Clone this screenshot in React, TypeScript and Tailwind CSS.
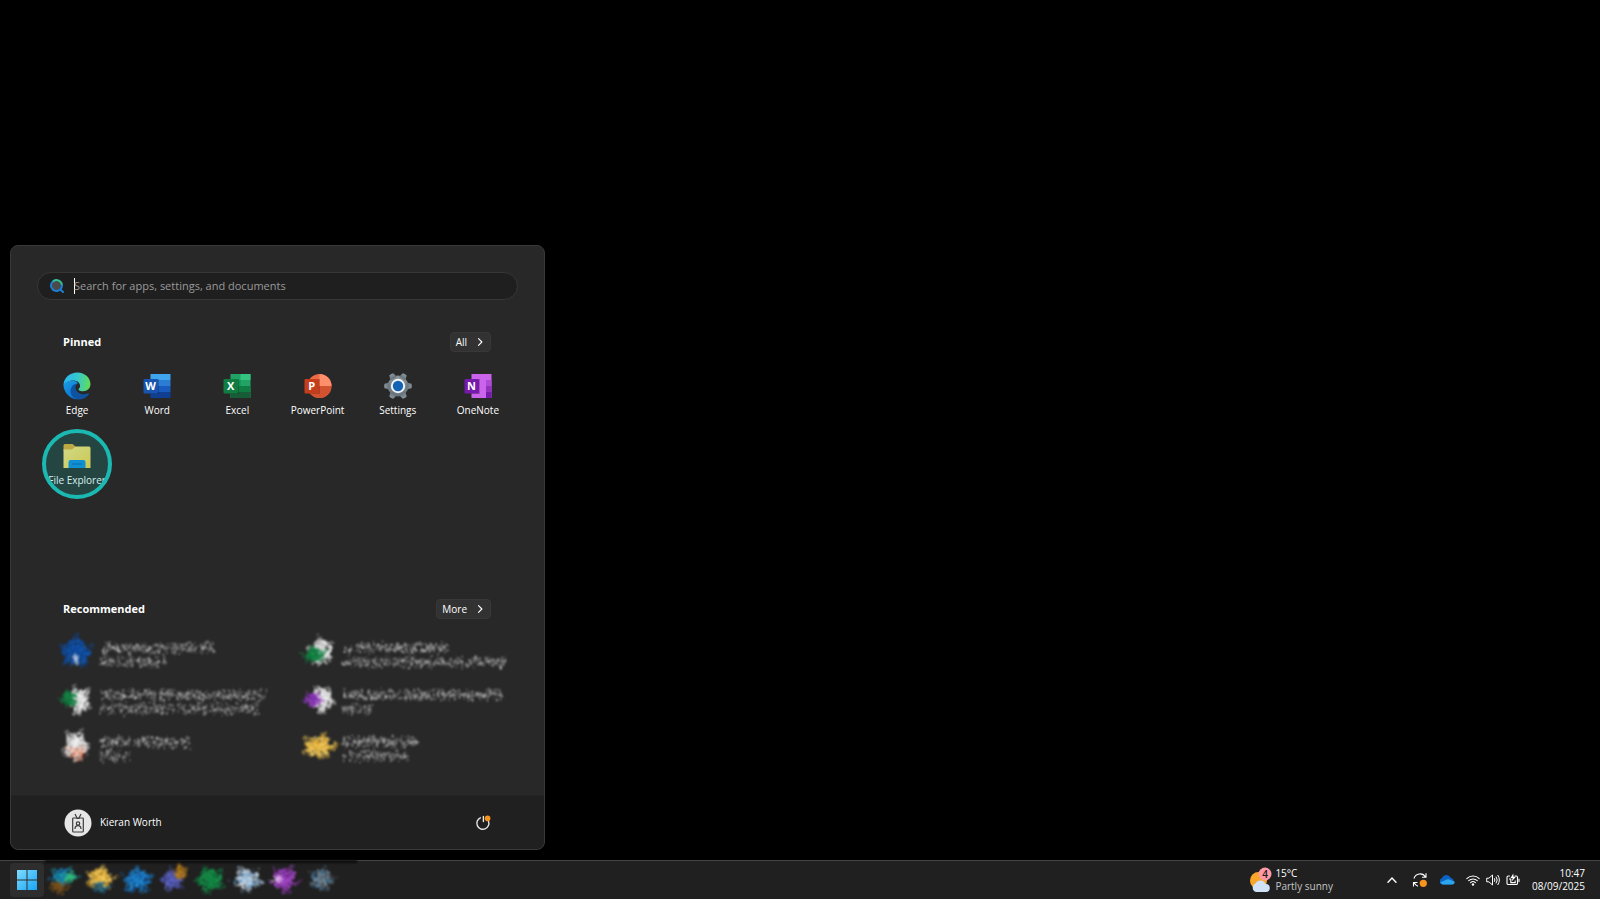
import type { ReactNode } from 'react'

type Blob = { x: number; y: number; rx: number; ry: number; n: number; colors: string[] }

// small seeded generator, so the smudges look the same on every render
function seeded(seed: number) {
  let s = seed * 7919 + 17
  return () => {
    s = (s * 1664525 + 1013904223) % 4294967296
    return s / 4294967296
  }
}

function Smudge({ seed, blobs }: { seed: number; blobs: Blob[] }) {
  const rand = seeded(seed)
  const cells = blobs.flatMap((b) =>
    Array.from({ length: b.n * 2 }, () => {
      const a = rand() * Math.PI * 2
      // most cells sit near the middle, a few fly out along ragged spikes
      const ragged = 0.82 + 0.2 * Math.sin(a * 5 + seed) + 0.12 * Math.sin(a * 11 + seed * 2)
      const r = Math.pow(rand(), 0.75) * ragged
      return {
        x: b.x + Math.cos(a) * r * b.rx,
        y: b.y + Math.sin(a) * r * b.ry,
        o: r > 0.75 ? 0.3 : 0.6,
        c: b.colors[Math.floor(rand() * b.colors.length)],
      }
    }),
  )
  return (
    <svg className="size-8 shrink-0 overflow-visible blur-[0.8px]" viewBox="0 0 32 32" aria-hidden="true">
      {cells.map((p, i) => (
        <rect key={i} x={p.x - 1} y={p.y - 1} width="2.200" height="2.200" fill={p.c} opacity={p.o} />
      ))}
    </svg>
  )
}

function TextSmudge({ seed, widths }: { seed: number; widths: [number, number] }) {
  const rand = seeded(seed)
  const marks = widths.flatMap((w, line) => {
    const list: { x: number; y: number; w: number; h: number; o: number }[] = []
    for (let x = 0; x < w; x += 2) {
      if (rand() < 0.1) continue
      for (let k = 0; k < 5; k++) {
        const y = 10 + line * 14 + (rand() + rand() - 1) * 7
        list.push({ x: x + rand() * 3, y, w: 1 + rand(), h: 1 + rand() * 2, o: (line ? 0.14 : 0.2) + rand() * 0.4 })
      }
    }
    return list
  })
  return (
    <svg className="h-8 w-[176px] shrink-0 overflow-visible blur-[0.9px]" viewBox="0 0 176 32" aria-hidden="true">
      {marks.map((m, i) => (
        <rect key={i} x={m.x} y={m.y} width={m.w} height={m.h} fill="#e8e8e8" opacity={m.o} />
      ))}
    </svg>
  )
}

function EdgeIcon() {
  return (
    <svg viewBox="0 0 256 256" className="size-7" aria-hidden="true">
      <defs>
        <linearGradient id="edgeTop" x1="0" y1="0.4" x2="1" y2="0.5">
          <stop offset="0" stopColor="#2bb5f0" />
          <stop offset="0.5" stopColor="#35c8cf" />
          <stop offset="1" stopColor="#62dd55" />
        </linearGradient>
        <linearGradient id="edgeLeft" x1="0" y1="0" x2="0.6" y2="1">
          <stop offset="0" stopColor="#1b9de2" />
          <stop offset="1" stopColor="#0870d0" />
        </linearGradient>
      </defs>
      <path fill="url(#edgeTop)" d="M5 126C2 50 68 5 130 5c74 0 121 53 121 105 0 39-29 66-68 66-34 0-41-10-41-16 0-8 14-13 14-34 0-29-28-49-60-49-46 0-82 24-91 49z" />
      <path fill="url(#edgeLeft)" d="M5 124C6 182 60 250 130 250c22 0 47-6 61-14-72 8-110-45-92-94 7-24 25-34 37-38-8-16-30-28-56-27C40 79 8 98 5 124z" />
      <path fill="#0f52a0" d="M111 242C60 220 62 160 82 132c12-17 30-26 50-24-14 8-18 24-17 36 4 40 40 63 83 59 14-1 26-6 34-9 5-1 8 4 5 9-22 34-70 59-126 39z" />
    </svg>
  )
}

type OfficeProps = { letter: string; tile: string; children: ReactNode }

function OfficeIcon({ letter, tile, children }: OfficeProps) {
  return (
    <svg viewBox="0 0 28 28" className="size-7" aria-hidden="true">
      {children}
      <rect x="7" y="7" width="9" height="15" fill="#000" opacity="0.2" />
      <rect x="0.5" y="7" width="14.5" height="14.5" rx="1" fill={tile} />
      <text x="7.6" y="18.4" textAnchor="middle" fontSize="11" fontWeight="700" fill="#fff" fontFamily="Open Sans, sans-serif">
        {letter}
      </text>
    </svg>
  )
}

function WordIcon() {
  return (
    <OfficeIcon letter="W" tile="#1853ae">
      <rect x="7.5" y="2" width="20" height="6" fill="#41a5ee" />
      <rect x="7.5" y="8" width="20" height="6" fill="#2b7cd3" />
      <rect x="7.5" y="14" width="20" height="6" fill="#185abd" />
      <rect x="7.5" y="20" width="20" height="6" fill="#103f91" />
    </OfficeIcon>
  )
}

function ExcelIcon() {
  return (
    <OfficeIcon letter="X" tile="#107c41">
      <rect x="7.5" y="2" width="20" height="24" fill="#21a366" />
      <rect x="17.5" y="2" width="10" height="6" fill="#33c481" />
      <rect x="7.5" y="14" width="20" height="6" fill="#107c41" />
      <rect x="7.5" y="8" width="10" height="6" fill="#159052" />
      <rect x="7.5" y="20" width="20" height="6" fill="#185c37" />
    </OfficeIcon>
  )
}

function PowerPointIcon() {
  return (
    <OfficeIcon letter="P" tile="#c43e1c">
      <circle cx="15.5" cy="14" r="12" fill="#ed6c47" />
      <path d="M15.5 2a12 12 0 0 1 12 12h-12z" fill="#ff8f6b" />
      <path d="M3.5 14h24a12 12 0 0 1-24 0z" fill="#d35230" />
    </OfficeIcon>
  )
}

function OneNoteIcon() {
  return (
    <OfficeIcon letter="N" tile="#7719aa">
      <rect x="7.5" y="2" width="20" height="24" fill="#ca64ea" />
      <rect x="22" y="8" width="5.5" height="6" fill="#ae4bd5" />
      <rect x="22" y="14" width="5.5" height="6" fill="#9332bf" />
      <rect x="22" y="20" width="5.5" height="6" fill="#7719aa" />
    </OfficeIcon>
  )
}

function SettingsIcon() {
  return (
    <svg viewBox="0 0 28 28" className="size-7" aria-hidden="true">
      <defs>
        <linearGradient id="gear" x1="0" y1="0" x2="0" y2="1">
          <stop offset="0" stopColor="#8a959c" />
          <stop offset="1" stopColor="#66727a" />
        </linearGradient>
      </defs>
      <g fill="url(#gear)">
        <circle cx="14" cy="14" r="10.4" />
        {[30, 90, 150, 210, 270, 330].map((deg) => (
          <path key={deg} d="M10.400 5.500 11.700.6q2.300-.8 4.600 0l1.300 4.900z" transform={`rotate(${deg} 14 14)`} />
        ))}
      </g>
      <circle cx="14" cy="14" r="7.200" fill="#f0f2f4" />
      <circle cx="14" cy="14" r="5.200" fill="#1462b4" />
    </svg>
  )
}

function FolderIcon() {
  return (
    <svg viewBox="0 0 28 28" className="size-7" aria-hidden="true">
      <defs>
        <linearGradient id="folder" x1="0" y1="0" x2="1" y2="1">
          <stop offset="0" stopColor="#ffe27a" />
          <stop offset="1" stopColor="#f8cc3e" />
        </linearGradient>
      </defs>
      <path d="M0.500 3.500q0-1.500 1.500-1.500h7.500l3 2.500v4h-12z" fill="#e5a52a" />
      <path d="M0.500 7.500h8.500l3.500-3H26q1.500 0 1.500 1.500v20h-27z" fill="url(#folder)" />
      <path d="M5.500 26v-6q0-2 2-2h13q2 0 2 2v6z" fill="#0c86dc" />
      <path d="M9.500 22h9" stroke="#075aa8" strokeWidth="1.200" strokeLinecap="round" />
    </svg>
  )
}

function SearchIcon() {
  return (
    <svg viewBox="0 0 14 14" className="size-[14px] shrink-0" fill="none" aria-hidden="true">
      <circle cx="6.500" cy="6.500" r="5" fill="#4a4a4a" />
      <path d="M6.500 1a5.500 5.500 0 1 0 3.900 9.400" stroke="#1b7fd6" strokeWidth="1.900" />
      <path d="M3 2.400A5.500 5.500 0 0 1 12 6.500" stroke="#34bf8f" strokeWidth="1.900" />
      <path d="M12 6.500a5.500 5.500 0 0 1-1.600 3.900L13 13" stroke="#1b7fd6" strokeWidth="2" strokeLinecap="round" />
    </svg>
  )
}

function Chevron({ className }: { className?: string }) {
  return (
    <svg viewBox="0 0 8 8" className={className} fill="none" stroke="currentColor" strokeWidth="0.900" aria-hidden="true">
      <path d="M2.800 1.300 5.500 4 2.800 6.700" strokeLinecap="round" strokeLinejoin="round" />
    </svg>
  )
}

const pinned = [
  { name: 'Edge', icon: <EdgeIcon /> },
  { name: 'Word', icon: <WordIcon /> },
  { name: 'Excel', icon: <ExcelIcon /> },
  { name: 'PowerPoint', icon: <PowerPointIcon /> },
  { name: 'Settings', icon: <SettingsIcon /> },
  { name: 'OneNote', icon: <OneNoteIcon /> },
  { name: 'File Explorer', icon: <FolderIcon />, highlighted: true },
]

const whites = ['#ffffff', '#e2e2e2', '#bdbdbd', '#f4f4f4']
const greens = ['#107c41', '#1d9a50', '#0d6d38']
const purples = ['#8a35b8', '#a44fd0', '#7a2aa8']
const golds = ['#e8b43a', '#f5cf5c', '#d39a25', '#f7d878']

const recommended: { blobs: Blob[]; widths: [number, number] }[] = [
  {
    blobs: [
      { x: 15, y: 15, rx: 18, ry: 17, n: 260, colors: ['#0f4fa8', '#1560bd', '#123f85', '#0d4796'] },
      { x: 15, y: 22, rx: 4, ry: 7, n: 12, colors: ['#c9d6ea', '#8ea9d2'] },
    ],
    widths: [114, 68],
  },
  {
    blobs: [
      { x: 18, y: 14, rx: 14, ry: 16, n: 150, colors: whites },
      { x: 11, y: 18, rx: 14, ry: 9, n: 90, colors: greens },
    ],
    widths: [106, 164],
  },
  {
    blobs: [
      { x: 18, y: 16, rx: 13, ry: 16, n: 160, colors: whites },
      { x: 8, y: 15, rx: 10, ry: 10, n: 70, colors: greens },
    ],
    widths: [166, 158],
  },
  {
    blobs: [
      { x: 19, y: 15, rx: 13, ry: 16, n: 160, colors: whites },
      { x: 10, y: 16, rx: 11, ry: 9, n: 60, colors: purples },
    ],
    widths: [160, 30],
  },
  {
    blobs: [
      { x: 15, y: 14, rx: 14, ry: 17, n: 170, colors: whites },
      { x: 15, y: 22, rx: 14, ry: 9, n: 40, colors: ['#f0c4b6', '#e9977c', '#d8603c', '#f3d9d0'] },
    ],
    widths: [90, 30],
  },
  {
    blobs: [{ x: 16, y: 15, rx: 19, ry: 14, n: 190, colors: golds }],
    widths: [76, 66],
  },
]

const runningApps: Blob[][] = [
  [
    { x: 13, y: 22, rx: 11, ry: 9, n: 60, colors: ['#8a5a1c', '#6e4a1e'] },
    { x: 17, y: 12, rx: 16, ry: 10, n: 90, colors: ['#1384b8', '#20a7a0', '#1a6fb0'] },
    { x: 24, y: 13, rx: 8, ry: 6, n: 20, colors: ['#35c07a'] },
  ],
  [
    { x: 17, y: 14, rx: 17, ry: 13, n: 150, colors: golds },
    { x: 18, y: 23, rx: 12, ry: 7, n: 30, colors: ['#1c6f96', '#27536b'] },
  ],
  [{ x: 17, y: 16, rx: 17, ry: 15, n: 170, colors: ['#1565b5', '#1e8bd8', '#0f5096', '#2a9be0'] }],
  [
    { x: 15, y: 16, rx: 14, ry: 13, n: 120, colors: ['#5058b8', '#6a6fce', '#464d9c'] },
    { x: 23, y: 8, rx: 9, ry: 8, n: 45, colors: ['#c98a1c', '#9a6b1c'] },
  ],
  [{ x: 16, y: 16, rx: 16, ry: 15, n: 160, colors: ['#118a45', '#1fa557', '#0f7039'] }],
  [{ x: 16, y: 15, rx: 17, ry: 14, n: 150, colors: ['#dfeaf4', '#9cc8ea', '#5d95c4', '#b9c2ca'] }],
  [
    { x: 17, y: 15, rx: 16, ry: 15, n: 140, colors: ['#9b3fc0', '#b75ad8', '#7d2ba0'] },
    { x: 9, y: 15, rx: 8, ry: 4, n: 16, colors: ['#efc9f8', '#d8a0ea'] },
  ],
  [{ x: 16, y: 15, rx: 15, ry: 13, n: 100, colors: ['#6d7780', '#98a3ac', '#4a5d6c', '#3779a8'] }],
]

function SectionHeader({ title, action }: { title: string; action: string }) {
  return (
    <div className="flex h-5 items-center justify-between pr-[53px] pl-[52px]">
      <h2 className="text-[11px] font-bold text-white">{title}</h2>
      <button className="flex h-5 items-center gap-2 rounded border border-[#383838] bg-[#323232] px-[5px] text-[10px] font-medium text-white">
        {action}
        <Chevron className="size-[10px]" />
      </button>
    </div>
  )
}

function StartMenu() {
  return (
    <section className="w-[535px] rounded-lg border border-[#393939] bg-[#282828]">
      <div className="px-[26px] pt-[26px]">
        <label className="flex h-7 items-center gap-[10px] rounded-full border border-[#363636] bg-[#1f1f1f] px-[12px]">
          <SearchIcon />
          <span className="h-4 w-px bg-white" />
          <input
            type="text"
            aria-label="Search"
            placeholder="Search for apps, settings, and documents"
            className="-ml-[11px] min-w-0 flex-1 bg-transparent text-[11px] outline-none placeholder:text-[#9a9a9a]"
          />
        </label>
      </div>

      <div className="pt-8">
        <SectionHeader title="Pinned" action="All" />
        <div className="mt-5 grid h-[210px] auto-rows-[70px] grid-cols-6 px-[26px]">
          {pinned.map((app) => (
            <button key={app.name} className="relative flex flex-col items-center gap-[2px]">
              {app.icon}
              <span className="text-[10px] leading-4 font-medium whitespace-nowrap text-white">{app.name}</span>
              {app.highlighted && (
                <span className="absolute -top-[13px] left-1/2 size-[70px] -translate-x-1/2 rounded-full border-4 border-[#1bb9b1] bg-[#1bb9b1]/20" />
              )}
            </button>
          ))}
        </div>
      </div>

      <div className="pt-[17px] pb-[25px]">
        <SectionHeader title="Recommended" action="More" />
        <div className="mt-[10px] grid auto-rows-[47px] grid-cols-2 pl-[50px]">
          {recommended.map((item, i) => (
            <button key={i} aria-label="Recommended file" className="flex items-center gap-[6px]">
              <Smudge seed={i + 3} blobs={item.blobs} />
              <TextSmudge seed={i + 40} widths={item.widths} />
            </button>
          ))}
        </div>
      </div>

      <footer className="flex h-[54px] items-center justify-between rounded-b-lg border-t border-[#242424] bg-[#202020] px-[53px]">
        <button className="flex items-center gap-2 text-[10px] font-medium text-white">
          <svg viewBox="0 0 28 28" className="size-7" fill="none" stroke="#3c3c3c" strokeWidth="1.200" aria-hidden="true">
            <circle cx="14" cy="14" r="13.500" fill="#e6e6e6" stroke="none" />
            <rect x="8.700" y="9" width="10.600" height="14" rx="0.800" />
            <path d="M11 5l2 4M17 5l-2 4M12.500 9.500h3" />
            <circle cx="14" cy="14.500" r="1.700" />
            <path d="M11 20c0-4.500 6-4.500 6 0" />
          </svg>
          Kieran Worth
        </button>
        <button aria-label="Power">
          <svg viewBox="0 0 16 16" className="size-4" fill="none" stroke="#e6e6e6" strokeWidth="1.400" aria-hidden="true">
            <path d="M5.300 2.800a6 6 0 1 0 8.200 3.400M8.400 1.500V6.500" strokeLinecap="round" />
            <circle cx="12.600" cy="3.400" r="2.800" fill="#f7941d" stroke="none" />
          </svg>
        </button>
      </footer>
    </section>
  )
}

function Taskbar() {
  return (
    <nav className="flex h-[39px] items-center border-t border-[#454545] bg-[#202020] pr-[15px] pl-[10px] text-[10px] leading-[13px] font-medium text-white">
      <button aria-label="Start" className="flex size-[34px] items-center justify-center rounded bg-[#2e2e2e]">
        <svg viewBox="0 0 20 20" className="size-5" aria-hidden="true">
          <defs>
            <linearGradient id="win" x1="0" y1="0" x2="20" y2="20" gradientUnits="userSpaceOnUse">
              <stop offset="0" stopColor="#7fdcff" />
              <stop offset="1" stopColor="#16a4f5" />
            </linearGradient>
          </defs>
          <path fill="url(#win)" d="M0 0h9.500v9.500H0zM10.500 0H20v9.500h-9.500zM0 10.500h9.500V20H0zM10.500 10.500H20V20h-9.500z" />
        </svg>
      </button>
      <div className="relative flex items-center gap-[5px] pl-[2px]">
        <span className="absolute -top-[4px] -right-5 left-[1px] h-[3px] bg-[#0c0c0c] blur-[1px]" />
        {runningApps.map((blobs, i) => (
          <button key={i} aria-label="Running app" className="relative">
            <Smudge seed={i + 70} blobs={blobs} />
          </button>
        ))}
      </div>

      <button className="ml-auto flex items-center gap-[3px] text-left">
        <svg viewBox="0 0 22 26" className="h-[26px] w-[22px]" aria-hidden="true">
          <circle cx="8.500" cy="13.500" r="8.500" fill="#f8a52b" />
          <path d="M6 25a4.500 4.500 0 0 1-.5-8.500A5.500 5.500 0 0 1 15.500 17a4 4 0 0 1 .5 8z" fill="#cfe2f8" />
          <circle cx="15" cy="7" r="6.500" fill="#ff99a4" />
          <text x="15" y="10.500" textAnchor="middle" fontSize="10" fontWeight="600" fill="#1a1a1a" fontFamily="Open Sans, sans-serif">4</text>
        </svg>
        <span>
          15°C
          <br />
          <span className="text-[#c4c4c4]">Partly sunny</span>
        </span>
      </button>

      <button aria-label="Hidden icons" className="ml-[54px]">
        <svg viewBox="0 0 10 10" className="size-[10px]" fill="none" stroke="currentColor" strokeWidth="1.400" aria-hidden="true">
          <path d="M1 7.200 5 3l4 4.200" strokeLinecap="round" />
        </svg>
      </button>
      <button aria-label="Updates" className="ml-[15px]">
        <svg viewBox="0 0 16 16" className="size-4" fill="none" stroke="currentColor" strokeWidth="1.100" aria-hidden="true">
          <path d="M2 6.500A6.300 6.300 0 0 1 13.500 5M14 1.300V5.200h-4M6 14.300a6.500 6.500 0 0 1-3.800-3.500M1.500 14.500v-4h4" />
          <circle cx="11.300" cy="11.300" r="3.600" fill="#f7941d" stroke="none" />
        </svg>
      </button>
      <button aria-label="OneDrive" className="ml-[11px]">
        <svg viewBox="0 0 16 12" className="h-3 w-4" aria-hidden="true">
          <path d="M3.500 10.500A3.400 3.400 0 0 1 3 4a4.800 4.800 0 0 1 8.700-.3A3.600 3.600 0 0 1 12.500 10.500z" fill="#0b63c4" />
          <path d="M3.500 10.500 1 8.500 9 5l6.500 2.500a2.500 2.500 0 0 1-2.300 3z" fill="#2aa5ee" />
        </svg>
      </button>
      <button aria-label="Network, sound and battery" className="ml-[11px] flex items-center gap-[6px]">
        <svg viewBox="0 0 14 14" className="size-[14px]" fill="none" stroke="currentColor" strokeWidth="1.100" aria-hidden="true">
          <path d="M.8 5.600a8.800 8.800 0 0 1 12.400 0M2.700 7.700a6.100 6.100 0 0 1 8.600 0M4.600 9.700a3.400 3.400 0 0 1 4.800 0" strokeLinecap="round" />
          <circle cx="7" cy="11.500" r="1.200" fill="currentColor" stroke="none" />
        </svg>
        <svg viewBox="0 0 14 14" className="size-[14px]" fill="none" stroke="currentColor" strokeWidth="1" aria-hidden="true">
          <path d="M.7 5.200h2.200L6.500 2v10L2.900 8.800H.7zM8.300 5.200q1.200 1.800 0 3.600M10 3.600q2.400 3.400 0 6.800M11.700 2q3.300 5 0 10" strokeLinejoin="round" />
        </svg>
        <svg viewBox="0 0 14 14" className="size-[14px]" fill="none" stroke="currentColor" strokeWidth="1.100" aria-hidden="true">
          <path d="M3.500 3H2.300Q1 3 1 4.300v5.900Q1 11.500 2.300 11.500h7.900q1.300 0 1.300-1.300V4.300Q11.500 3 10.200 3H9M13 6v2.600" strokeLinecap="round" />
          <path d="M3 6h1.800v3.600h4.400v-2" stroke="currentColor" />
          <path d="M7.300.5 4.500 5h2.200L5.600 8.500 10 3.800H7.500z" fill="currentColor" stroke="none" />
        </svg>
      </button>
      <button className="ml-[12px] text-right">
        10:47
        <br />
        08/09/2025
      </button>
    </nav>
  )
}

export default function App() {
  return (
    <div className="flex min-h-screen flex-col bg-black font-['Open_Sans','Noto_Sans',sans-serif]">
      <main className="flex flex-1 items-end px-[10px] pb-[10px]">
        <StartMenu />
      </main>
      <Taskbar />
    </div>
  )
}
